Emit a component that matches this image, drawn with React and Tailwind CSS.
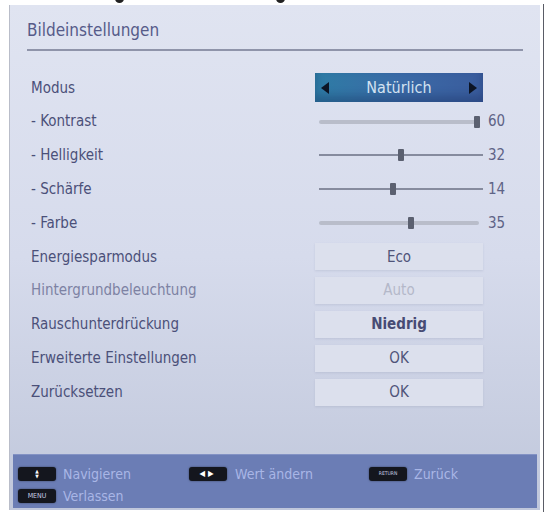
import React from "react";

const FONT = { fontFamily: '"DejaVu Sans Condensed","Liberation Sans Narrow","Roboto Condensed","Noto Sans",sans-serif' };

function Slider({ pos, value, light }) {
  return (
    <div className="flex items-center h-full">
      <div className="relative w-[164px] h-[12px] ml-[4px]">
        <div
          className={
            light
              ? "absolute left-0 right-[4px] top-[4px] h-[4px] bg-[#b9bdca] rounded-full"
              : "absolute left-0 right-0 top-[5px] h-[2px] bg-[#868b9e]"
          }
        />
        <div
          className="absolute top-0 w-[6px] h-[12px] bg-[#5b6070] rounded-[1px]"
          style={{ left: pos - 3 }}
        />
      </div>
      <span className="ml-[5px] text-[15px] text-[#5e6386]">{value}</span>
    </div>
  );
}

function ValueBox({ children, tone }) {
  const color =
    tone === "faded" ? "text-[#b4b8c9]" : tone === "dark" ? "text-[#474c74] font-bold" : "text-[#4f5479]";
  return (
    <div className="flex items-center h-full">
      <div
        className={`w-[168px] h-[27px] flex items-center justify-center bg-[#dce0ed] shadow-[0_1px_2px_rgba(120,128,160,0.2)] text-[15px] ${color}`}
      >
        {children}
      </div>
    </div>
  );
}

function Row({ label, faded, children }) {
  return (
    <div className="flex h-[33.8px] items-center">
      <div className={`w-[305px] pl-[21px] text-[15px] ${faded ? "text-[#7d82a3]" : "text-[#4b5079]"}`}>{label}</div>
      <div className="h-full">{children}</div>
    </div>
  );
}

function Key({ children }) {
  return (
    <div className="w-[38px] h-[14px] bg-[#14161e] rounded-[3px] flex items-center justify-center text-[7px] text-[#c9cfe6] shadow-[0_0_2px_rgba(0,0,0,0.5)]">
      {children}
    </div>
  );
}

export default function App() {
  return (
    <div className="relative w-[548px] h-[512px] bg-white overflow-hidden" style={FONT}>
      <div className="absolute left-[115px] top-[-2px] w-[9px] h-[5px] rounded-b-full bg-[#222]" />
      <div className="absolute left-[276px] top-[-2px] w-[9px] h-[5px] rounded-b-full bg-[#222]" />
      <div className="absolute left-[543px] top-[4px] w-[1px] h-[508px] bg-[#5a5c66]" />
      <div className="pt-[5px] pl-[9px]">
        <div className="w-[531px] h-[505px] flex flex-col bg-gradient-to-b from-[#e0e4f1] via-[#d6dbec] to-[#c0c7db] border-l border-[#b9bdc9]">
          <div className="pl-[17px] pt-[17px] h-[44px] text-[17px] text-[#565b89] leading-none">Bildeinstellungen</div>
          <div className="mx-[17px] h-[2px] bg-[#8f94aa]" />
          <div className="pt-[20px] flex flex-col">
            <Row label="Modus">
              <div className="flex items-center h-full">
                <div className="relative w-[168px] h-[29px] flex items-center justify-center bg-gradient-to-r from-[#2d7ca5] via-[#3a6aa6] to-[#3a5c9d] shadow-[inset_0_-6px_8px_rgba(20,40,90,0.35)]">
                  <div className="absolute left-[6px] top-[9px] w-0 h-0 border-y-[6px] border-y-transparent border-r-[8px] border-r-[#0c1424]" />
                  <span className="text-[16px] text-[#d3e2f1]">Natürlich</span>
                  <div className="absolute right-[6px] top-[9px] w-0 h-0 border-y-[6px] border-y-transparent border-l-[8px] border-l-[#0c1424]" />
                </div>
              </div>
            </Row>
            <Row label="- Kontrast">
              <Slider pos={158} value="60" light />
            </Row>
            <Row label="- Helligkeit">
              <Slider pos={82} value="32" />
            </Row>
            <Row label="- Schärfe">
              <Slider pos={74} value="14" />
            </Row>
            <Row label="- Farbe">
              <Slider pos={92} value="35" light />
            </Row>
            <Row label="Energiesparmodus">
              <ValueBox>Eco</ValueBox>
            </Row>
            <Row label="Hintergrundbeleuchtung" faded>
              <ValueBox tone="faded">Auto</ValueBox>
            </Row>
            <Row label="Rauschunterdrückung">
              <ValueBox tone="dark">Niedrig</ValueBox>
            </Row>
            <Row label="Erweiterte Einstellungen">
              <ValueBox>OK</ValueBox>
            </Row>
            <Row label="Zurücksetzen">
              <ValueBox>OK</ValueBox>
            </Row>
          </div>
          <div className="flex-1" />
          <div className="mx-[3px] mb-[2px] h-[54px] bg-[#6b7db5] border-t border-[#8392c4] pl-[5px] pt-[11px] text-[14px] text-[#a9b6e6]">
            <div className="flex items-center h-[16px]">
              <div className="w-[171px] flex items-center gap-[7px]">
                <Key>
                  <span className="flex flex-col items-center leading-none text-[5px] text-white">
                    <span>▲</span>
                    <span>▼</span>
                  </span>
                </Key>
                <span>Navigieren</span>
              </div>
              <div className="w-[180px] flex items-center gap-[8px]">
                <Key>
                  <span className="text-white text-[8px] tracking-[3px]">◀▶</span>
                </Key>
                <span>Wert ändern</span>
              </div>
              <div className="flex items-center gap-[7px]">
                <Key>
                  <span className="text-[5px]">RETURN</span>
                </Key>
                <span>Zurück</span>
              </div>
            </div>
            <div className="flex items-center gap-[7px] h-[16px] mt-[6px]">
              <Key>MENU</Key>
              <span>Verlassen</span>
            </div>
          </div>
        </div>
      </div>
    </div>
  );
}
